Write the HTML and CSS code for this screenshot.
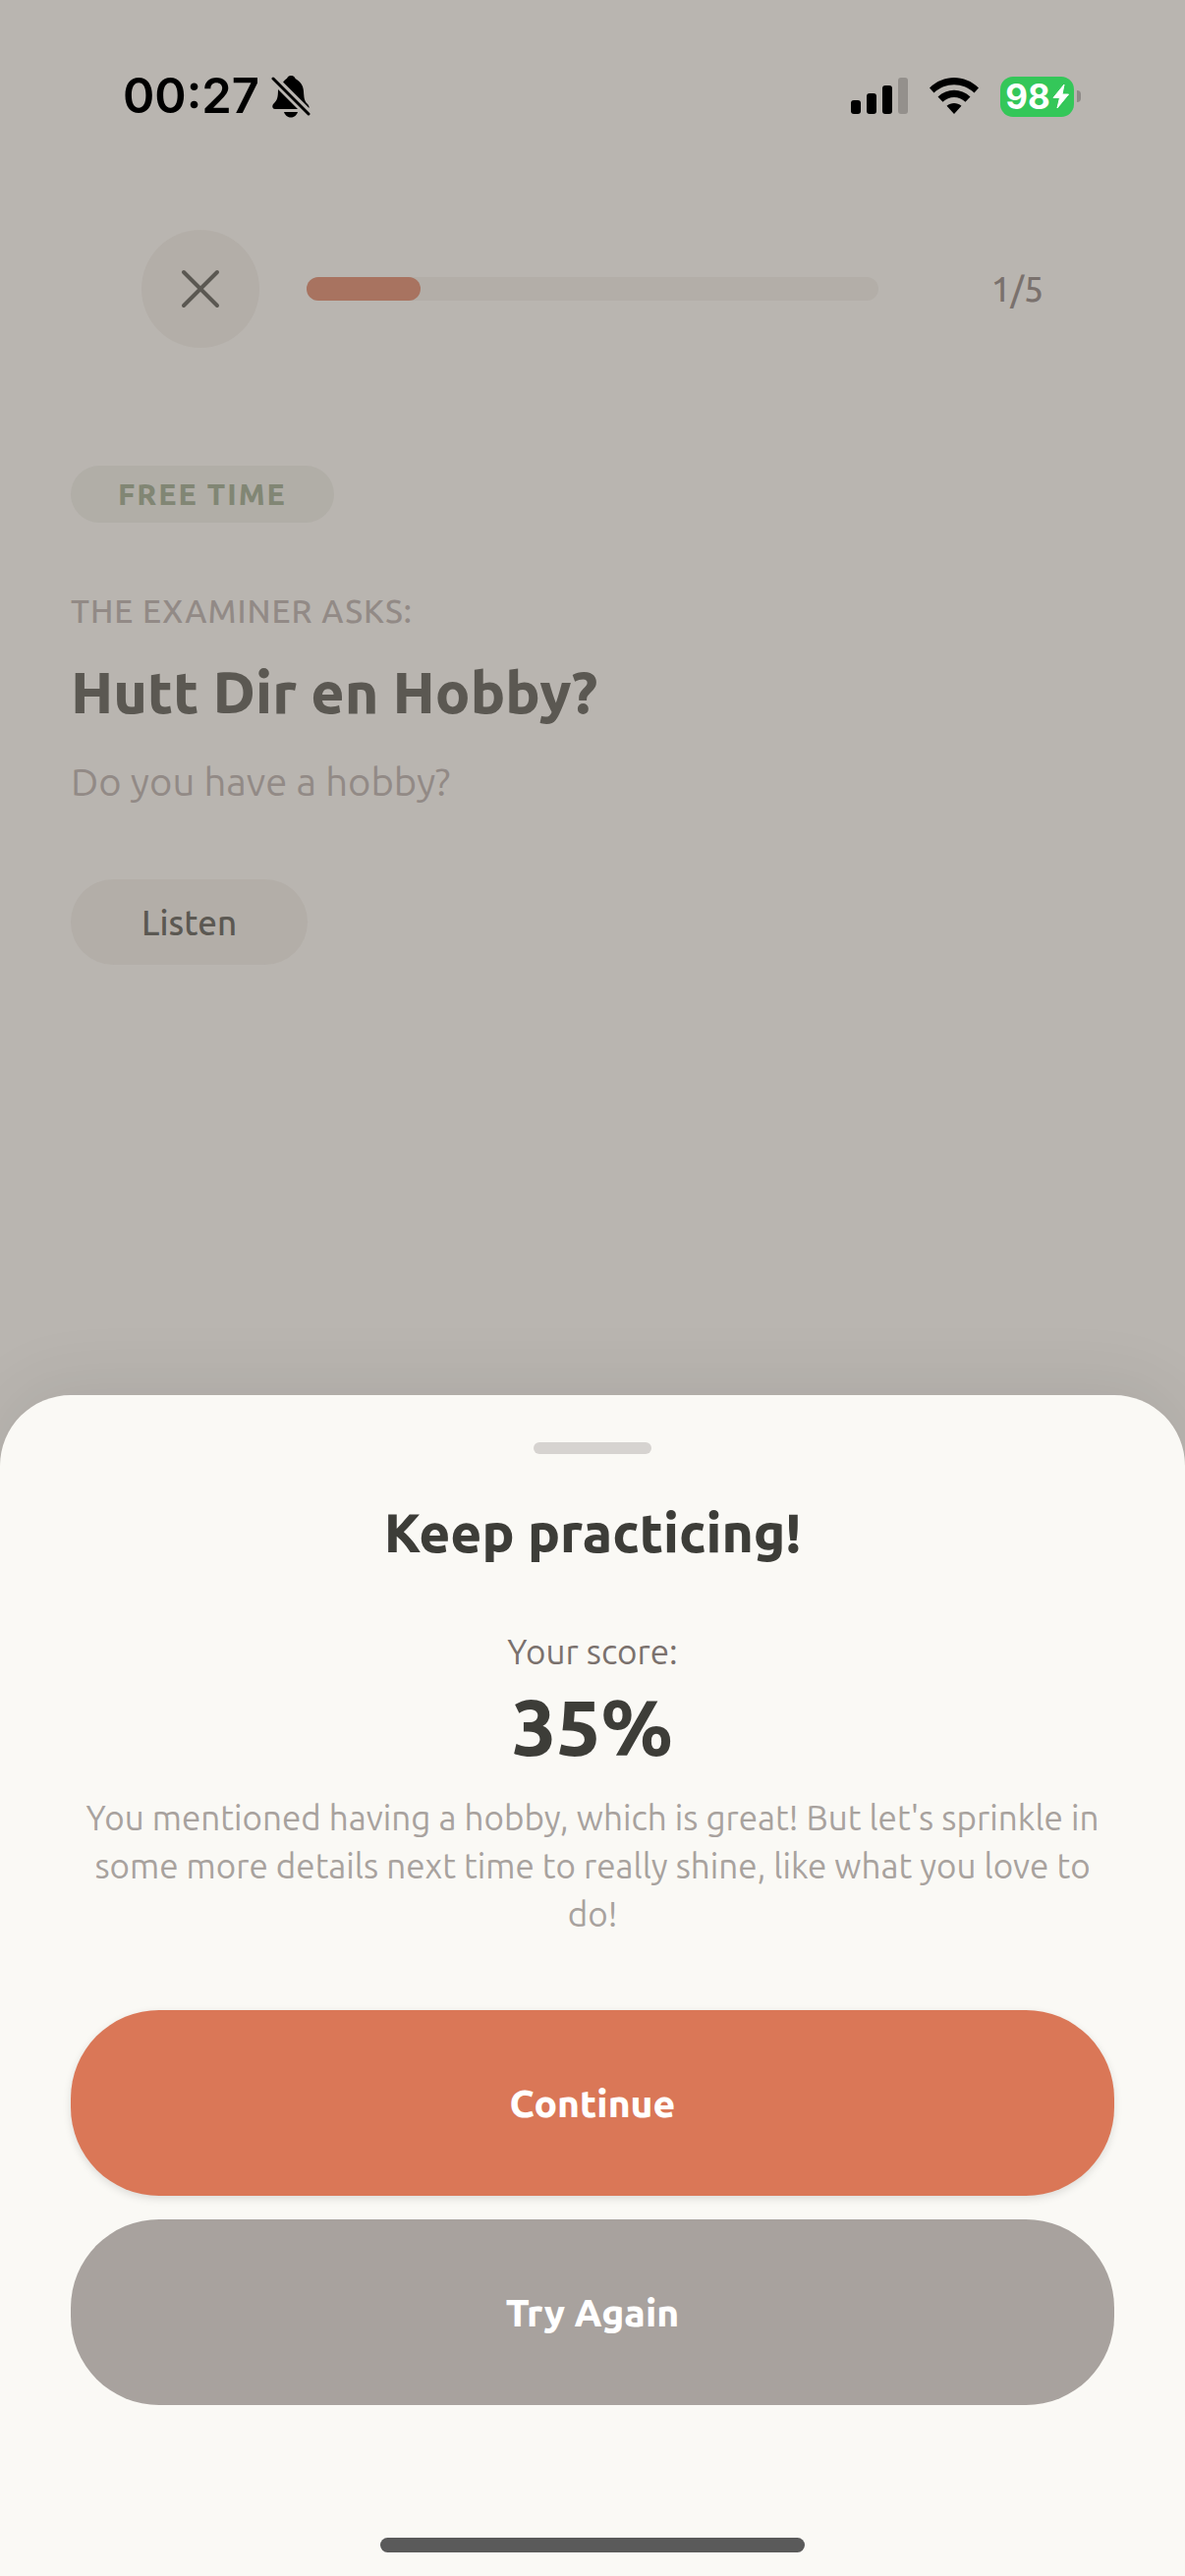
FILE: index.html
```html
<!DOCTYPE html>
<html lang="en">
<head>
<meta charset="utf-8">
<meta name="viewport" content="width=device-width, initial-scale=1">
<title>Speaking practice</title>
<link rel="stylesheet" href="styles.css">
</head>
<body>
<div class="screen">
  <div class="status">
    <div class="status-left">
      <span class="clock">00:27</span>
      <svg class="bell" width="40" height="44" viewBox="0 0 40 44" aria-hidden="true">
        <path d="M12 8C14 4.500 16 4.500 16.500 3C18 .4 22.500 .4 24 3C24.500 4.500 27 5 29.500 8C33 12 33 16 33.300 21C33.600 26 35 28 37.500 30.500C38.500 32 38.800 33 38.500 34L12 7.500Z"/>
        <path d="M7 15L27 35H4C1 35 .5 31.500 2.500 29.500C6 26 7 24 7 15Z"/>
        <path d="M13 38H27C25.500 42 23 43.500 20 43.500S14.500 42 13 38Z"/>
        <path d="M2 4L38 40" fill="none" stroke="#b9b5b0" stroke-width="6"/>
        <path d="M2 4L38 40" fill="none" stroke="#000" stroke-width="3" stroke-linecap="round"/>
      </svg>
    </div>
    <div class="status-right">
      <svg width="58" height="38" viewBox="0 0 58 38" aria-hidden="true">
        <rect x="0" y="23" width="10" height="14" rx="3"/>
        <rect x="16" y="16" width="10" height="21" rx="3"/>
        <rect x="32" y="8" width="10" height="29" rx="3"/>
        <rect x="48" y="0" width="10" height="37" rx="3" fill="#94908c"/>
      </svg>
      <svg width="50" height="38" viewBox="0 0 50 38" aria-hidden="true">
        <path d="M0 10.500C14 -3.500 36 -3.500 50 10.500L45.500 15.500C34 4.500 16 4.500 4.500 15.500Z"/>
        <path d="M8.500 19.500C18 10.500 32 10.500 41.500 19.500L36.500 24.800C30 18.500 20 18.500 13.500 24.800Z"/>
        <path d="M17.500 28.800C22 25 28 25 32.500 28.800L25 37Z"/>
      </svg>
      <div class="battery">
        <span class="battery-body">98<svg width="17" height="26" viewBox="0 0 17 26" aria-hidden="true"><path d="M12 1L1 14.500H7.500L5 25L16.500 11H10Z" fill="#fff" stroke="#fff" stroke-linejoin="round"/></svg></span>
        <span class="battery-tip"></span>
      </div>
    </div>
  </div>

  <header class="topbar">
    <button class="close" type="button" aria-label="Close">
      <svg width="40" height="40" viewBox="0 0 40 40" aria-hidden="true"><path d="M3 3L37 37M37 3L3 37" fill="none" stroke="#5b5852" stroke-width="4" stroke-linecap="round"/></svg>
    </button>
    <div class="track" role="progressbar" aria-label="Progress" aria-valuemin="0" aria-valuemax="5" aria-valuenow="1"><div class="fill" style="width:20%"></div></div>
    <span class="count">1/5</span>
  </header>

  <main class="question">
    <span class="tag">FREE TIME</span>
    <p class="eyebrow">THE EXAMINER ASKS:</p>
    <h1 class="prompt">Hutt Dir en Hobby?</h1>
    <p class="translation">Do you have a hobby?</p>
    <button class="listen" type="button">Listen</button>
  </main>

  <section class="sheet" aria-labelledby="result">
    <div class="handle"></div>
    <h2 class="result" id="result">Keep practicing!</h2>
    <p class="score-label">Your score:</p>
    <p class="score">35%</p>
    <p class="feedback">You mentioned having a hobby, which is great! But let's sprinkle in some more details next time to really shine, like what you love to do!</p>
    <div class="actions">
      <button class="action primary" type="button">Continue</button>
      <button class="action" type="button">Try Again</button>
    </div>
    <div class="home"></div>
  </section>
</div>
</body>
</html>
```
FILE: styles.css
```css
* { box-sizing: border-box; }

body {
  margin: 0;
  background: #b9b5b0;
  font-family: Ubuntu, "Noto Sans", sans-serif;
  color: #3d3d38;
}

h1, h2, p { margin: 0; }

button {
  border: 0;
  padding: 0;
  font: inherit;
  color: inherit;
}

svg { display: block; }

.screen {
  display: flex;
  flex-direction: column;
  min-height: 100vh;
}

/* Status bar */
.status {
  display: flex;
  justify-content: space-between;
  align-items: center;
  height: 196px;
  padding: 0 106px 0 125px;
  color: #000;
  font-family: Inter, sans-serif;
}

.status-left {
  display: flex;
  align-items: center;
  gap: 12px;
}

.clock {
  font-size: 49px;
  line-height: 60px;
  font-weight: 600;
}

.status-right {
  display: flex;
  align-items: center;
  gap: 22px;
}

.battery {
  display: flex;
  align-items: center;
  gap: 3px;
}

.battery-body {
  display: flex;
  align-items: center;
  justify-content: center;
  gap: 2px;
  width: 75px;
  height: 41px;
  border-radius: 13px;
  background: #34c759;
  color: #fff;
  font-size: 35px;
  line-height: 41px;
  font-weight: 700;
}

.battery-tip {
  width: 4px;
  height: 12px;
  border-radius: 0 4px 4px 0;
  background: #8e8a87;
}

/* Lesson progress */
.topbar {
  display: flex;
  align-items: center;
  gap: 48px;
  margin-top: 38px;
  padding: 0 144px;
}

.close {
  display: grid;
  place-items: center;
  width: 120px;
  height: 120px;
  border-radius: 50%;
  background: #b3aea8;
}

.track {
  flex: 1;
  height: 24px;
  border-radius: 12px;
  background: #b3aea8;
}

.fill {
  height: 100%;
  border-radius: 12px;
  background: #a87360;
}

.count {
  width: 120px;
  text-align: right;
  color: #7a716d;
  font-size: 35px;
  line-height: 48px;
  font-weight: 500;
}

/* Question */
.question {
  display: flex;
  flex: 1;
  flex-direction: column;
  align-items: flex-start;
  padding: 120px 72px 72px;
  color: #5b5852;
}

.tag {
  padding: 8px 48px;
  border-radius: 29px;
  background: #b1aea7;
  color: #818674;
  font-size: 30px;
  line-height: 42px;
  font-weight: 800;
  letter-spacing: 2px;
}

.eyebrow {
  margin-top: 66px;
  color: #928a86;
  font-size: 33px;
  line-height: 48px;
  font-weight: 500;
  letter-spacing: 1px;
}

.prompt {
  margin-top: 19px;
  font-size: 59px;
  line-height: 78px;
  font-weight: 800;
}

.translation {
  margin-top: 23px;
  color: #928a86;
  font-size: 40px;
  line-height: 60px;
}

.listen {
  height: 87px;
  margin-top: 69px;
  padding: 0 72px;
  border-radius: 44px;
  background: #b3aea8;
  font-size: 35px;
  line-height: 48px;
  font-weight: 500;
}

/* Result sheet */
.sheet {
  display: flex;
  flex-direction: column;
  align-items: center;
  padding: 48px 72px 24px;
  border-radius: 72px 72px 0 0;
  background: #faf9f5;
  box-shadow: 0 -12px 72px rgba(0, 0, 0, .07);
  text-align: center;
}

.handle {
  width: 120px;
  height: 12px;
  border-radius: 6px;
  background: #d6d3d0;
}

.result {
  margin-top: 41px;
  font-size: 55px;
  line-height: 78px;
  font-weight: 800;
}

.score-label {
  margin-top: 58px;
  color: #7a716d;
  font-size: 35px;
  line-height: 48px;
}

.score {
  margin-top: 4px;
  font-size: 80px;
  line-height: 96px;
  font-weight: 800;
}

.feedback {
  margin-top: 21px;
  padding: 0 12px;
  color: #a8a29e;
  font-size: 35px;
  line-height: 49px;
}

.actions {
  display: flex;
  flex-direction: column;
  gap: 24px;
  width: 100%;
  margin-top: 73px;
}

.action {
  height: 189px;
  border-radius: 90px;
  background: #a8a29e;
  color: #fff;
  font-size: 39px;
  line-height: 60px;
  font-weight: 800;
}

.primary {
  background: #da7757;
  box-shadow: 0 3px 9px rgba(0, 0, 0, .12);
}

.home {
  width: 432px;
  height: 15px;
  margin-top: 135px;
  border-radius: 8px;
  background: #5a5a5a;
}
```
